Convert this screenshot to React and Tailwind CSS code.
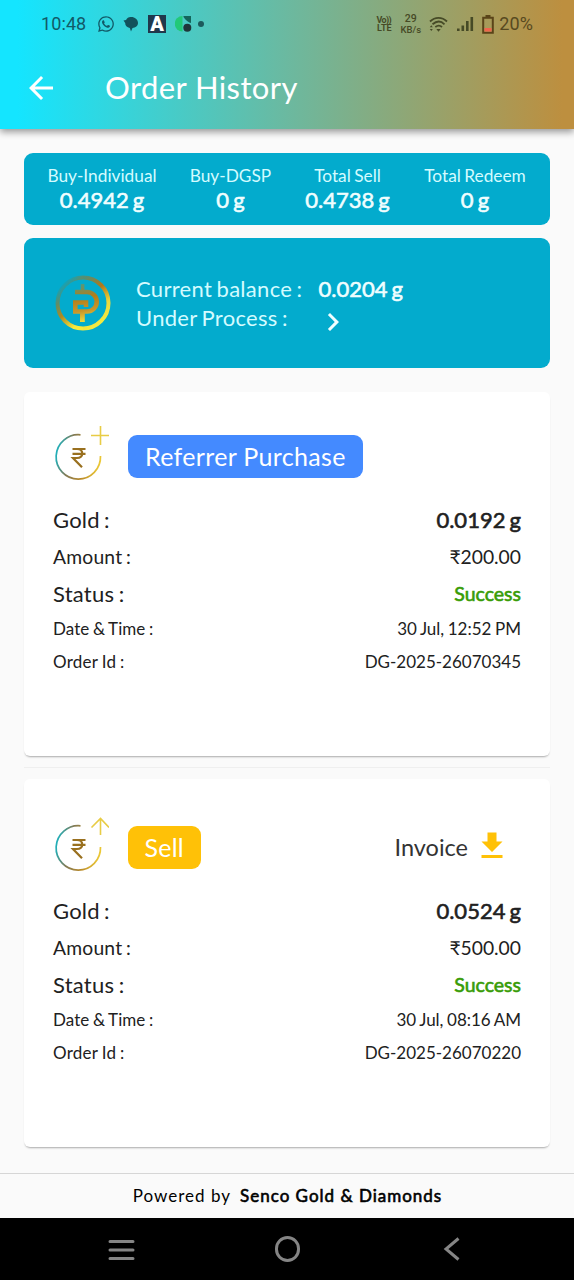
import { FaWhatsapp } from "react-icons/fa";
import { MdArrowBack, MdChevronRight, MdFileDownload } from "react-icons/md";

const stats = [
  { label: "Buy-Individual", value: "0.4942 g", width: "w-[156px]" },
  { label: "Buy-DGSP", value: "0 g", width: "w-[101px]" },
  { label: "Total Sell", value: "0.4738 g", width: "w-[133px]" },
  { label: "Total Redeem", value: "0 g", width: "w-[122px]" },
];

const orders = [
  {
    id: "DG-2025-26070345",
    type: "Referrer Purchase",
    kind: "buy",
    gold: "0.0192 g",
    amount: "₹200.00",
    status: "Success",
    date: "30 Jul, 12:52 PM",
  },
  {
    id: "DG-2025-26070220",
    type: "Sell",
    kind: "sell",
    gold: "0.0524 g",
    amount: "₹500.00",
    status: "Success",
    date: "30 Jul, 08:16 AM",
    invoice: true,
  },
];

function StatusBar() {
  return (
    <div className="flex h-12 items-center justify-between pl-[41px] pr-[41px] font-[Roboto,sans-serif]">
      <div className="flex items-center text-[#125a68]">
        <span className="w-[56px] text-[18px] leading-6 tracking-[0.1px]">10:48</span>
        <FaWhatsapp size={18} />
        <svg className="ml-[8px]" width="16" height="16" viewBox="0 0 16 16" fill="#12525c">
          <path d="M7.500 1C11 .5 15 3 15 7c0 3-2.500 4.800-5.500 5l-1.500 3.500-1.200-3.500C4 11.500 2 9.500 2.200 7L.5 4.500 3 4C4 2 5.500 1.200 7.500 1z" />
        </svg>
        <div className="ml-[9px] flex h-[18px] w-[18px] items-center justify-center bg-[#20384c] text-[20px] font-black leading-none text-white">
          A
        </div>
        <svg className="ml-[9px]" width="17" height="16" viewBox="0 0 17 16">
          <path d="M7.500 0v15.500A7.700 7.700 0 0 1 7.500 0z" fill="#21c978" />
          <path d="M8.500 0H16v7C14 6.500 11 5 8.500 1z" fill="#14665c" />
          <circle cx="12.300" cy="11.800" r="4" fill="#20363a" />
        </svg>
        <span className="ml-[6px] h-[6px] w-[6px] rounded-full bg-[#1c5a5c]" />
      </div>
      <div className="flex items-center text-[#464a26]">
        <div className="w-[16px] text-center text-[9px] font-bold leading-[8px]">
          <div className="-ml-px whitespace-nowrap tracking-[-0.6px]">Vo))</div>
          <div>LTE</div>
        </div>
        <div className="ml-[7px] w-[23px] text-center text-[10.500px] font-medium leading-[11px]">
          <div>29</div>
          <div className="whitespace-nowrap text-[9.500px]">KB/s</div>
        </div>
        <svg className="ml-[7px]" width="19" height="17" viewBox="0 0 19 17" fill="none" stroke="currentColor" strokeWidth="1.800">
          <path d="M1 5.500C6 .6 13 .6 18 5.500M3.500 8.300c4-3.500 8.500-3.500 12 0M6.300 11c2.500-2 4.500-2 6.700 0" />
          <path d="M7.300 13h4.400l-2.200 2.800zM.8 11.300h3l-1.500-2zM.8 13h3l-1.500 2z" fill="currentColor" stroke="none" />
        </svg>
        <svg className="ml-[8px]" width="18" height="16" viewBox="0 0 18 16" fill="currentColor">
          <path d="M1 12.500h2.600V15H1zM5.500 9.500h2.600V15H5.500zM10 5h2.600v10H10zM14.500 1h2.600v14h-2.600z" />
        </svg>
        <svg className="ml-[8px]" width="12" height="19" viewBox="0 0 12 19">
          <path d="M3.500 0h5v2h-5z" fill="#5a4419" />
          <path d="M1.200 2.700h9.600v15H1.200z" fill="none" stroke="#5a4419" strokeWidth="2" />
          <path d="M2.500 13h7v3.500h-7z" fill="#f0654c" />
        </svg>
        <span className="ml-[5px] text-[18px] leading-6 tracking-[0.1px] text-[#574920]">20%</span>
      </div>
    </div>
  );
}

function CoinLogo() {
  return (
    <svg width="58" height="58" viewBox="0 0 58 58" fill="none">
      <defs>
        <linearGradient id="coinRing" x1="0.15" y1="0.1" x2="0.6" y2="1">
          <stop offset="0" stopColor="#00a8cb" />
          <stop offset="0.3" stopColor="#5f8d69" />
          <stop offset="0.6" stopColor="#b08a20" />
          <stop offset="1" stopColor="#f6ea3e" />
        </linearGradient>
        <linearGradient id="coinRight" x1="0" y1="0" x2="0.3" y2="1">
          <stop offset="0" stopColor="#4f9079" />
          <stop offset="0.35" stopColor="#b0781c" />
          <stop offset="0.7" stopColor="#ecd83c" />
          <stop offset="1" stopColor="#f4ea40" />
        </linearGradient>
        <linearGradient id="coinMark" gradientUnits="userSpaceOnUse" x1="27" y1="10" x2="33" y2="48">
          <stop offset="0" stopColor="#4f9a82" />
          <stop offset="0.35" stopColor="#b37d18" />
          <stop offset="0.7" stopColor="#c8962a" />
          <stop offset="1" stopColor="#f0e040" />
        </linearGradient>
      </defs>
      <path d="M29 3.500a25.500 25.500 0 0 0 0 51" stroke="url(#coinRing)" strokeWidth="4" />
      <path d="M29 3.500a25.500 25.500 0 0 1 0 51" stroke="url(#coinRight)" strokeWidth="4" />
      <path
        d="M21 18h12a9.700 9.700 0 0 1 0 19.500H21.300V28.500H32v4.500"
        stroke="url(#coinMark)"
        strokeWidth="4.600"
      />
      <path d="M26.800 10h3.600v7h-3.600zM26 38h4.800v10H26z" fill="url(#coinMark)" />
    </svg>
  );
}

function OrderIcon({ kind }) {
  return (
    <svg width="56" height="58" viewBox="0 0 56 58" fill="none">
      <defs>
        <linearGradient id={`ring-${kind}`} x1="0" y1="0.4" x2="1" y2="0.6">
          <stop offset="0" stopColor="#1fb0bb" />
          <stop offset="0.3" stopColor="#807a57" />
          <stop offset="0.65" stopColor="#b98a2b" />
          <stop offset="1" stopColor="#ecc936" />
        </linearGradient>
      </defs>
      <path
        d="M27.500 8.800A22.200 22.200 0 1 0 47.500 30"
        stroke={`url(#ring-${kind})`}
        strokeWidth="1.700"
      />
      {kind === "buy" ? (
        <path d="M47.500 0v19M38 9.500h18" stroke="#e8cc45" strokeWidth="1.600" />
      ) : (
        <path d="M47.500 18V1.500M38.500 10.500l9-9 8.500 9" stroke="#e8cc45" strokeWidth="1.600" />
      )}
      <path
        d="M19.500 23h13M19.500 27.800h13M19.500 23h4.500c7 0 7 9 0 9h-4l9 9.300"
        stroke="#99701f"
        strokeWidth="2.200"
      />
    </svg>
  );
}

function OrderCard({ order }) {
  return (
    <div
      className={`rounded-md bg-white px-[29px] pb-[77px] shadow-[0_2px_2px_-1px_rgba(0,0,0,0.32)] ${
        order.kind === "buy" ? "pt-[34px]" : "pt-[38px]"
      }`}
    >
      <div className="flex h-[72px] items-start">
        <OrderIcon kind={order.kind} />
        <div
          className={`ml-[18.500px] mt-[9px] flex h-[43px] items-center rounded-[9px] text-[25px] text-white ${
            order.kind === "buy"
              ? "bg-[#448aff] px-[17.500px] tracking-[0.330px]"
              : "bg-[#ffc107] px-[17px] tracking-[0.250px]"
          }`}
        >
          {order.type}
        </div>
        {order.invoice && (
          <div className="ml-auto mr-[11px] mt-[10px] flex items-center text-[23.500px] text-[#333]">
            <span className="pt-[3px]">Invoice</span>
            <MdFileDownload size={36} className="ml-[6px] text-[#ffc107]" />
          </div>
        )}
      </div>
      <div className="flex flex-col text-[#212121] [word-spacing:-1.500px]">
        <div className="flex h-[43px] items-center justify-between text-[22px]">
          <span className="tracking-[0.200px]">Gold :</span>
          <span className="[-webkit-text-stroke:0.600px]">{order.gold}</span>
        </div>
        <div className="flex h-[32px] items-center justify-between text-[19.300px]">
          <span className="tracking-[0.200px]">Amount :</span>
          <span>{order.amount}</span>
        </div>
        <div className="flex h-[40px] items-center justify-between">
          <span className="text-[22px] tracking-[0.250px]">Status :</span>
          <span className="pt-[2px] text-[19.500px] text-[#389c06] [-webkit-text-stroke:0.600px]">
            {order.status}
          </span>
        </div>
        <div className="flex h-[32px] items-center justify-between text-[17px] [word-spacing:-0.800px]">
          <span className="tracking-[0.050px]">Date &amp; Time :</span>
          <span>{order.date}</span>
        </div>
        <div className="flex h-[34px] items-center justify-between text-[17px] [word-spacing:-0.800px]">
          <span className="tracking-[0.250px]">Order Id :</span>
          <span>{order.id}</span>
        </div>
      </div>
    </div>
  );
}

export default function App() {
  return (
    <div className="flex h-[1280px] w-[574px] flex-col overflow-hidden bg-[#fafafa] font-[Lato,sans-serif]">
      {/* App bar */}
      <header className="h-[129px] shrink-0 bg-[linear-gradient(to_right,#14e5ff_3%,#6bb9a0_50%,#bd8f3f_98%)] shadow-[0_3px_7px_rgba(0,0,0,0.4)]">
        <StatusBar />
        <div className="flex h-[80px] items-center pl-[23px] text-white">
          <MdArrowBack size={36} />
          <h1 className="ml-[46px] -mt-[2px] text-[31px] tracking-[0.400px]">Order History</h1>
        </div>
      </header>

      <main className="flex flex-1 flex-col px-[24px] pt-[24px]">
        {/* Totals */}
        <section className="flex h-[72px] items-center rounded-[9px] bg-[#03abcd] pb-[2px] text-[#d4fbff]">
          {stats.map((s) => (
            <div key={s.label} className={`flex shrink-0 flex-col items-center ${s.width}`}>
              <span className="text-[17.300px] leading-[23px] [word-spacing:-1px]">{s.label}</span>
              <span className="-mt-px text-[22px] leading-[27px] text-[#f0feff] [-webkit-text-stroke:0.600px] [word-spacing:-1.500px]">
                {s.value}
              </span>
            </div>
          ))}
        </section>

        {/* Balance */}
        <section className="mt-[13px] flex h-[130px] items-center rounded-[9px] bg-[#03abcd] pl-[30px] text-[22px] text-[#d4fbff] [word-spacing:-1.500px]">
          <CoinLogo />
          <div className="ml-[24px] flex flex-col leading-[29px]">
            <div className="flex">
              <span className="w-[182.500px] tracking-[0.300px]">Current balance :</span>
              <span className="text-[#f0feff] [-webkit-text-stroke:0.600px]">0.0204 g</span>
            </div>
            <div className="flex h-[29px] items-center">
              <span className="w-[179px] tracking-[0.300px]">Under Process :</span>
              <MdChevronRight size={36} className="mt-[8px] text-[#f0feff]" />
            </div>
          </div>
        </section>

        {/* Orders */}
        <section className="mt-[24px]">
          <OrderCard order={orders[0]} />
          <div className="mt-[11px] mb-[11px] h-px bg-[#efefef]" />
          <OrderCard order={orders[1]} />
        </section>
      </main>

      <footer className="flex h-[45px] shrink-0 items-center justify-center border-t border-[#d6d6d6] pl-px text-[17px] tracking-[1px] text-black">
        <span>Powered by</span>
        <span className="ml-[9px] [-webkit-text-stroke:0.600px]">Senco Gold &amp; Diamonds</span>
      </footer>

      {/* System navigation */}
      <nav className="flex h-[62px] shrink-0 items-center bg-black text-[#858585]">
        <svg className="ml-[108px]" width="27" height="24" viewBox="0 0 27 24" stroke="currentColor" strokeWidth="3" strokeLinecap="round">
          <path d="M2 4.500h23M2 13h23M2 21.500h23" />
        </svg>
        <div className="ml-[140px] h-[26px] w-[25px] rounded-full border-3 border-current" />
        <svg className="ml-[143px]" width="18" height="24" viewBox="0 0 18 24" fill="none" stroke="currentColor" strokeWidth="3">
          <path d="M15.500 1.500L3 12l12.500 10.500" />
        </svg>
      </nav>
    </div>
  );
}
